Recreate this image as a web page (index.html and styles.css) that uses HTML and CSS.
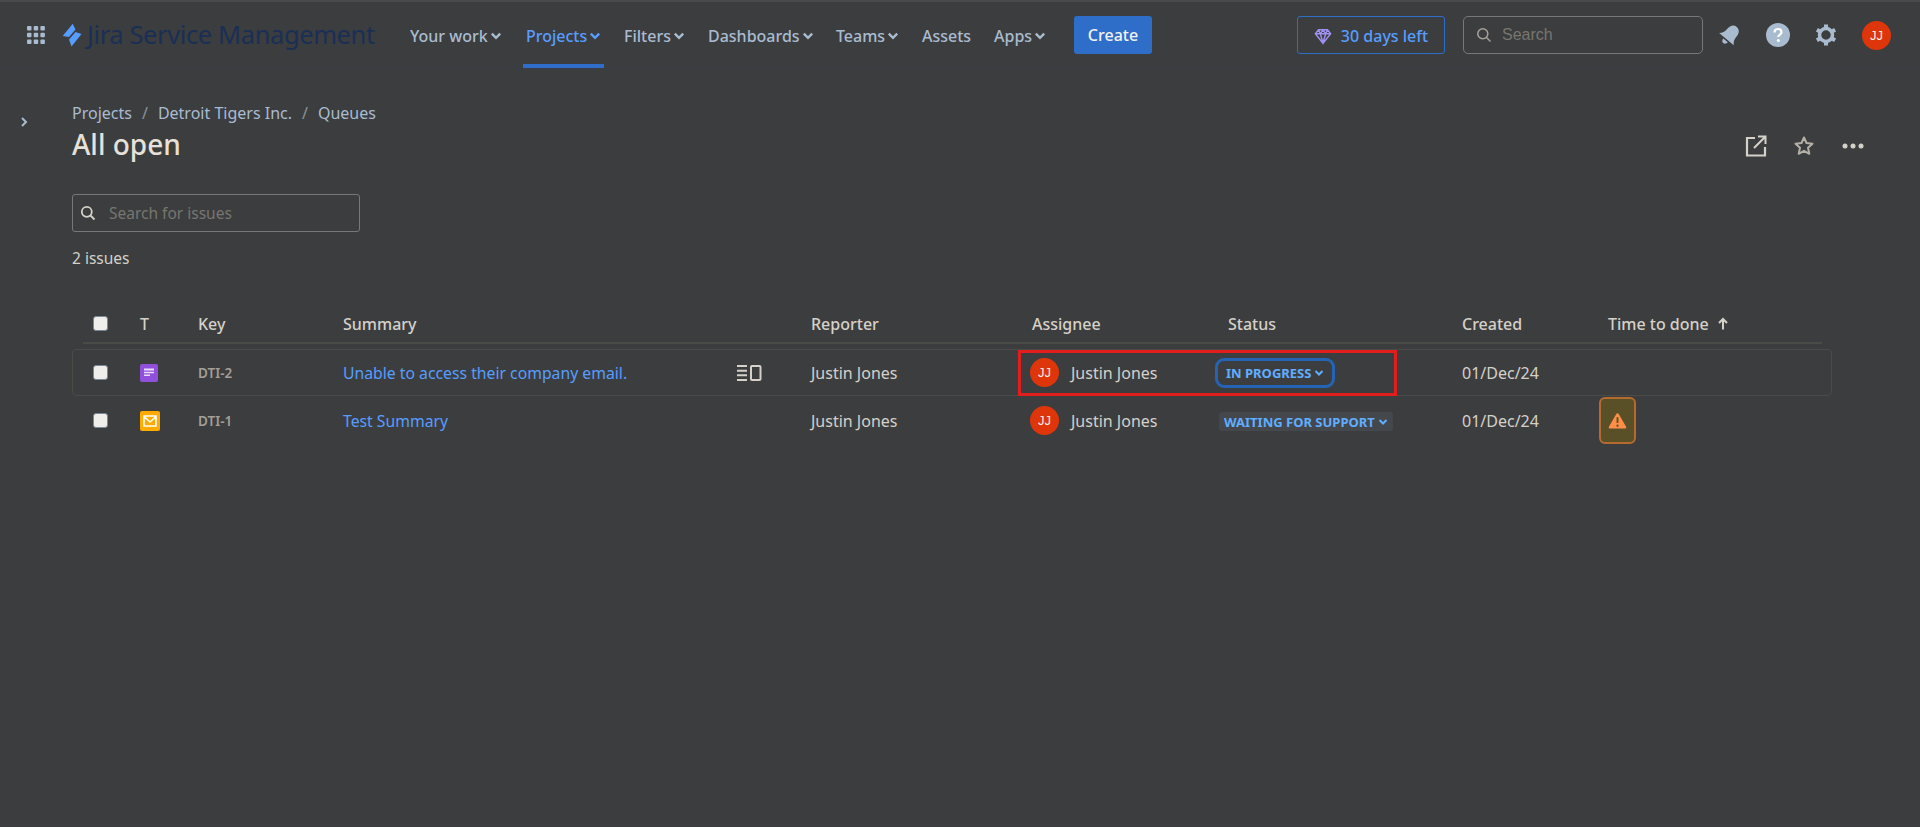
FILE: index.html
```html
<!DOCTYPE html>
<html lang="en">
<head>
  <meta charset="UTF-8" />
  <title>All open - Jira Service Management</title>
  <link rel="stylesheet" href="styles.css">
</head>
<body>
  <header class="topbar">
    <div class="nav-left">
      <svg class="apps" width="20" height="20" viewBox="0 0 20 20" fill="#a9bccf"><rect x="1" y="1" width="4.5" height="4.5" rx="1"/><rect x="7.7" y="1" width="4.5" height="4.5" rx="1"/><rect x="14.4" y="1" width="4.5" height="4.5" rx="1"/><rect x="1" y="7.7" width="4.5" height="4.5" rx="1"/><rect x="7.7" y="7.7" width="4.5" height="4.5" rx="1"/><rect x="14.4" y="7.7" width="4.5" height="4.5" rx="1"/><rect x="1" y="14.4" width="4.5" height="4.5" rx="1"/><rect x="7.7" y="14.4" width="4.5" height="4.5" rx="1"/><rect x="14.4" y="14.4" width="4.5" height="4.5" rx="1"/></svg>
      <div class="logo">
        <svg width="20" height="24" viewBox="0 0 20 24" fill="#579dff"><path d="M10.7 .7 L.7 13 L7 14 L13.5 6.500 Z"/><path d="M13.5 9 L19.500 11 L9.500 23.500 L7 16.500 Z"/></svg>
        <span class="logo-text">Jira Service Management</span>
      </div>
      <nav class="nav">
        <a class="nav-item">Your work <svg class="chev" width="10" height="8" viewBox="0 0 10 8"><path d="M1.5 2 L5 5.5 L8.5 2"/></svg></a>
        <a class="nav-item active">Projects <svg class="chev" width="10" height="8" viewBox="0 0 10 8"><path d="M1.5 2 L5 5.5 L8.5 2"/></svg></a>
        <a class="nav-item">Filters <svg class="chev" width="10" height="8" viewBox="0 0 10 8"><path d="M1.5 2 L5 5.5 L8.5 2"/></svg></a>
        <a class="nav-item">Dashboards <svg class="chev" width="10" height="8" viewBox="0 0 10 8"><path d="M1.5 2 L5 5.5 L8.5 2"/></svg></a>
        <a class="nav-item">Teams <svg class="chev" width="10" height="8" viewBox="0 0 10 8"><path d="M1.5 2 L5 5.5 L8.5 2"/></svg></a>
        <a class="nav-item">Assets</a>
        <a class="nav-item">Apps <svg class="chev" width="10" height="8" viewBox="0 0 10 8"><path d="M1.5 2 L5 5.5 L8.5 2"/></svg></a>
      </nav>
      <button class="create">Create</button>
    </div>
    <div class="nav-right">
      <div class="trial">
        <svg width="18" height="17" viewBox="0 0 20 18" fill="none" stroke="#9f8fef" stroke-width="1.6"><path d="M5 1.500 H15 L18.500 6 L10 16.500 L1.500 6 Z M1.500 6 H18.500 M7 6 L10 16 L13 6 M5 1.500 L7 6 L10 1.500 L13 6 L15 1.500"/></svg>
        <span>30 days left</span>
      </div>
      <div class="global-search">
        <svg width="16" height="16" viewBox="0 0 16 16" fill="none" stroke="#a8a39a" stroke-width="1.5"><circle cx="6.800" cy="6.800" r="5"/><path d="M10.500 10.500 L14.500 14.500"/></svg>
        <span>Search</span>
      </div>
      <div class="nav-icons">
        <svg width="24" height="24" viewBox="0 0 24 24" fill="#a9bccf"><g transform="rotate(40 12 12)"><path d="M12 1.500 C8 1.500 6 5 6 9 C6 13 5 15 2.500 17.500 H21.500 C19 15 18 13 18 9 C18 5 16 1.500 12 1.500 Z"/><path d="M9 19 H15 C15 21 13.500 22.500 12 22.500 C10.500 22.500 9 21 9 19 Z"/></g></svg>
        <svg width="24" height="24" viewBox="0 0 24 24"><circle cx="12" cy="12" r="12" fill="#a9bccf"/><path d="M8.500 9.500 C8.500 7 10 6 12 6 C14.200 6 15.500 7.300 15.500 9.200 C15.500 11.500 12.300 11.800 12.300 14" fill="none" stroke="#fff" stroke-width="2.200"/><circle cx="12.300" cy="17.500" r="1.500" fill="#fff"/></svg>
        <svg width="24" height="24" viewBox="0 0 24 24" fill="none" stroke="#a9bccf"><circle cx="12" cy="12" r="6.500" stroke-width="3.500"/><path d="M12 1.500 V5 M12 19 V22.500 M2.900 6.750 L6 8.500 M18 15.500 L21.100 17.250 M2.900 17.250 L6 15.500 M18 8.500 L21.100 6.750" stroke-width="4"/></svg>
        <span class="avatar small">JJ</span>
      </div>
    </div>
  </header>

  <main class="page">
    <button class="side-toggle">
      <svg width="10" height="12" viewBox="0 0 10 12" fill="none" stroke="#a9bccf" stroke-width="2"><path d="M3 2 L7 6 L3 10"/></svg>
    </button>
    <div class="content">
      <div class="crumbs">
        <span>Projects</span><i>/</i><span>Detroit Tigers Inc.</span><i>/</i><span>Queues</span>
      </div>
      <div class="title-row">
        <h1>All open</h1>
        <div class="title-actions">
          <svg width="24" height="24" viewBox="0 0 24 24" fill="none" stroke="#d5d1c9" stroke-width="2.200"><path d="M11 4 H3 V21.500 H21 V13"/><path d="M10 14 L21 3 M14 2.500 H21.500 V10" stroke-width="2"/></svg>
          <svg class="star" width="22" height="22" viewBox="0 0 22 22" fill="none" stroke="#b5afa5" stroke-width="2"><path d="M11 2.500 L13.500 8 L19.500 8.700 L15 12.800 L16.300 18.800 L11 15.800 L5.700 18.800 L7 12.800 L2.500 8.700 L8.500 8 Z" stroke-linejoin="round"/></svg>
          <svg width="22" height="6" viewBox="0 0 22 6" fill="#d5d1c9"><circle cx="3" cy="3" r="2.500"/><circle cx="11" cy="3" r="2.500"/><circle cx="19" cy="3" r="2.500"/></svg>
        </div>
      </div>
      <div class="issue-search">
        <svg width="16" height="16" viewBox="0 0 16 16" fill="none" stroke="#d5d1c9" stroke-width="1.800"><circle cx="6.800" cy="6.800" r="5"/><path d="M10.500 10.500 L14.500 14.500"/></svg>
        <span>Search for issues</span>
      </div>
      <p class="count">2 issues</p>

      <div class="table">
        <div class="row head">
          <div class="check"><span class="box"></span></div>
          <div>T</div>
          <div>Key</div>
          <div>Summary</div>
          <div>Reporter</div>
          <div>Assignee</div>
          <div>Status</div>
          <div>Created</div>
          <div class="sort">Time to done <svg width="12" height="13" viewBox="0 0 12 13" fill="none" stroke="#d5d1c9" stroke-width="2"><path d="M6 12.500 V2 M2 6 L6 2 L10 6"/></svg></div>
        </div>
        <div class="row item hovered">
          <div class="check"><span class="box"></span></div>
          <div><svg class="type" width="18" height="18" viewBox="0 0 18 18"><rect width="18" height="18" rx="2" fill="#9050dc"/><path d="M4 4.500 H14 V6.500 H4 Z M4 7.800 H14 V9.300 H4 Z M4 10.500 H10 V12 H4 Z" fill="#e8dcf8"/></svg></div>
          <div class="key">DTI-2</div>
          <div class="summary">
            <a>Unable to access their company email.</a>
            <svg class="detail" width="26" height="18" viewBox="0 0 26 18" fill="none" stroke="#d5d1c9" stroke-width="2"><path d="M1 2 H11 M1 6.700 H11 M1 11.300 H11 M1 16 H11"/><rect x="15" y="2" width="9.500" height="14" rx="1"/></svg>
          </div>
          <div>Justin Jones</div>
          <div class="person"><span class="avatar">JJ</span>Justin Jones</div>
          <div><span class="status focus">IN PROGRESS <svg class="chev" width="10" height="8" viewBox="0 0 10 8"><path d="M1.500 2 L5 5.500 L8.500 2"/></svg></span></div>
          <div>01/Dec/24</div>
          <div></div>
          <div class="callout"></div>
        </div>
        <div class="row item">
          <div class="check"><span class="box"></span></div>
          <div><svg class="type" width="20" height="20" viewBox="0 0 20 20"><rect width="20" height="20" rx="2" fill="#ffab00"/><path d="M4 5 H16 V15 H4 Z M4 5.500 L10 11 L16 5.500" fill="none" stroke="#fff" stroke-width="1.600"/></svg></div>
          <div class="key">DTI-1</div>
          <div class="summary"><a>Test Summary</a></div>
          <div>Justin Jones</div>
          <div class="person"><span class="avatar">JJ</span>Justin Jones</div>
          <div><span class="status">WAITING FOR SUPPORT <svg class="chev" width="10" height="8" viewBox="0 0 10 8"><path d="M1.500 2 L5 5.500 L8.500 2"/></svg></span></div>
          <div>01/Dec/24</div>
          <div>
            <span class="sla"><svg width="19" height="18" viewBox="0 0 20 18"><path d="M8.700 1.500 C9.300 .5 10.700 .5 11.300 1.500 L19 15 C19.600 16 18.900 17 17.800 17 H2.200 C1.100 17 .4 16 1 15 Z" fill="#ff8f47"/><path d="M10 5 V11" stroke="#5a5028" stroke-width="2"/><circle cx="10" cy="14" r="1.200" fill="#5a5028"/></svg></span>
          </div>
        </div>
      </div>
    </div>
  </main>
</body>
</html>
```

FILE: styles.css
```css
:root {
  --bg: #3c3d3f;
  --nav-text: #a9bccf;
  --text: #d5d1c9;
  --link: #579dff;
  --blue: #2e6ec8;
  --line: #4a4b47;
}

* {
  box-sizing: border-box;
}

body {
  margin: 0;
  min-height: 827px;
  background-color: var(--bg);
  color: var(--text);
  font-family: 'Noto Sans', 'Open Sans', sans-serif;
  font-size: 16px;
  overflow: hidden;
}

.topbar {
  height: 69px;
  padding: 0 29px 0 26px;
  display: flex;
  justify-content: space-between;
  border-top: 2px solid #48494b;
  border-bottom: 1px solid #383c48;
}

.nav-left, .nav-right, .logo, .nav-icons {
  display: flex;
  align-items: center;
}

.logo {
  margin-left: 16px;
  width: 345px;
  gap: 5px;
}

.logo-text {
  color: #1a2f55;
  font-size: 25.5px;
  letter-spacing: -0.4px;
  line-height: 30px;
  margin-top: -2px;
  white-space: nowrap;
}

.nav {
  height: 100%;
  display: grid;
  grid-template-columns: 116px 98px 84px 128px 86px 72px 83px;
}

.nav-item {
  height: 100%;
  justify-self: start;
  padding: 5px 3px 0;
  display: flex;
  align-items: center;
  gap: 2px;
  color: var(--nav-text);
  font-weight: 500;
  white-space: nowrap;
  border-bottom: 4px solid transparent;
  margin-bottom: -1px;
}

.nav-item.active {
  color: var(--link);
  border-bottom-color: var(--blue);
}

.nav-item .chev {
  width: 12px;
  height: 10px;
}

.chev {
  fill: none;
  stroke: currentColor;
  stroke-width: 2;
  flex: none;
}

.create {
  width: 78px;
  height: 38px;
  border: none;
  border-radius: 3px;
  background-color: var(--blue);
  color: #f2f2f2;
  font: 500 16px 'Noto Sans', sans-serif;
}

.nav-right {
  gap: 18px;
}

.trial {
  width: 148px;
  height: 38px;
  padding-top: 2px;
  display: flex;
  align-items: center;
  justify-content: center;
  gap: 9px;
  border: 1px solid var(--blue);
  border-radius: 3px;
  color: var(--link);
  font-weight: 500;
  white-space: nowrap;
}

.global-search {
  width: 240px;
  height: 38px;
  padding-left: 12px;
  display: flex;
  align-items: center;
  gap: 10px;
  border: 1px solid #77787a;
  border-radius: 5px;
  color: #77766f;
  font-family: 'Liberation Sans', sans-serif;
}

.global-search span {
  margin-top: -1px;
}

.nav-icons {
  gap: 24px;
  margin-left: -3px;
}

.avatar {
  width: 29px;
  height: 29px;
  flex: none;
  display: flex;
  align-items: center;
  justify-content: center;
  border-radius: 50%;
  background-color: #de350b;
  color: #f4eee6;
  font-family: 'Liberation Sans', sans-serif;
  font-size: 13px;
}

.page {
  display: flex;
  position: relative;
}

.side-toggle {
  position: absolute;
  left: 19px;
  top: 47px;
  padding: 0;
  background: none;
  border: none;
}

.content {
  flex: 1;
  padding: 34px 88px 0 72px;
}

.crumbs {
  display: flex;
  align-items: center;
  color: var(--nav-text);
  line-height: 20px;
}

.crumbs i {
  margin: 0 10px;
  font-style: normal;
  color: #8d9297;
}

.title-row {
  margin-top: 2px;
  height: 38px;
  display: flex;
  justify-content: space-between;
  align-items: center;
}

h1 {
  margin: 0;
  font-size: 28px;
  font-weight: 500;
  color: #e6e1d9;
}

.title-actions {
  display: flex;
  align-items: center;
  gap: 25px;
  margin: 3px -32px 0 0;
}

.title-actions .star {
  margin-right: 2px;
}

.issue-search {
  margin-top: 31px;
  width: 288px;
  height: 38px;
  padding-left: 7px;
  display: flex;
  align-items: center;
  gap: 13px;
  border: 1px solid #77787a;
  border-radius: 3px;
  color: #77766f;
  font-size: 15.5px;
}

.count {
  margin: 16px 0 0;
  font-size: 15.5px;
  line-height: 20px;
}

.table {
  margin-top: 35px;
}

.row {
  display: grid;
  grid-template-columns: 57px 58px 145px 468px 221px 196px 234px 146px 1fr;
  align-items: center;
  position: relative;
}

.row.head {
  height: 41px;
  padding-top: 2px;
  margin: 0 10px 0 11px;
  border-bottom: 2px solid var(--line);
  font-weight: 500;
}

.sort {
  display: flex;
  align-items: center;
  gap: 8px;
  white-space: nowrap;
}

.row.item {
  height: 47px;
  border: 1px solid transparent;
  border-bottom-color: var(--line);
  padding-left: 10px;
}

.row.item:last-child {
  border-bottom-color: transparent;
}

.row.hovered {
  margin-top: 5px;
  border: 1px solid var(--line);
  border-radius: 4px;
}

.check {
  padding-left: 10px;
}

.box {
  display: block;
  width: 15px;
  height: 15px;
  border-radius: 3px;
  background-color: #f0eeea;
  border: 1px solid #7b8896;
}

.type {
  display: block;
}

.key {
  font-size: 13.5px;
  font-weight: 600;
  color: #a39f96;
}

.summary {
  display: flex;
  align-items: center;
  justify-content: space-between;
  padding-right: 49px;
}

.summary a {
  color: var(--link);
  font-size: 15.75px;
}

.person {
  display: flex;
  align-items: center;
  gap: 12px;
  margin-left: -2px;
}

.status {
  display: inline-flex;
  align-items: center;
  gap: 3px;
  margin-left: -9px;
  padding: 0 5px;
  height: 19px;
  border-radius: 3px;
  background-color: #44474c;
  color: #60aeff;
  font-size: 13px;
  font-weight: 700;
  white-space: nowrap;
}

.status.focus {
  height: 30px;
  margin-left: -13px;
  padding: 0 8px;
  background: none;
  border: 3px solid #2563b5;
  border-radius: 9px;
}

.callout {
  position: absolute;
  left: 945px;
  top: 0;
  width: 379px;
  height: 46px;
  border: 3px solid #e31c1c;
  pointer-events: none;
}

.sla {
  margin-left: -9px;
  width: 37px;
  height: 47px;
  display: flex;
  align-items: center;
  justify-content: center;
  border: 2px solid #b56a2f;
  border-radius: 6px;
  background-color: #5a5028;
}
```
